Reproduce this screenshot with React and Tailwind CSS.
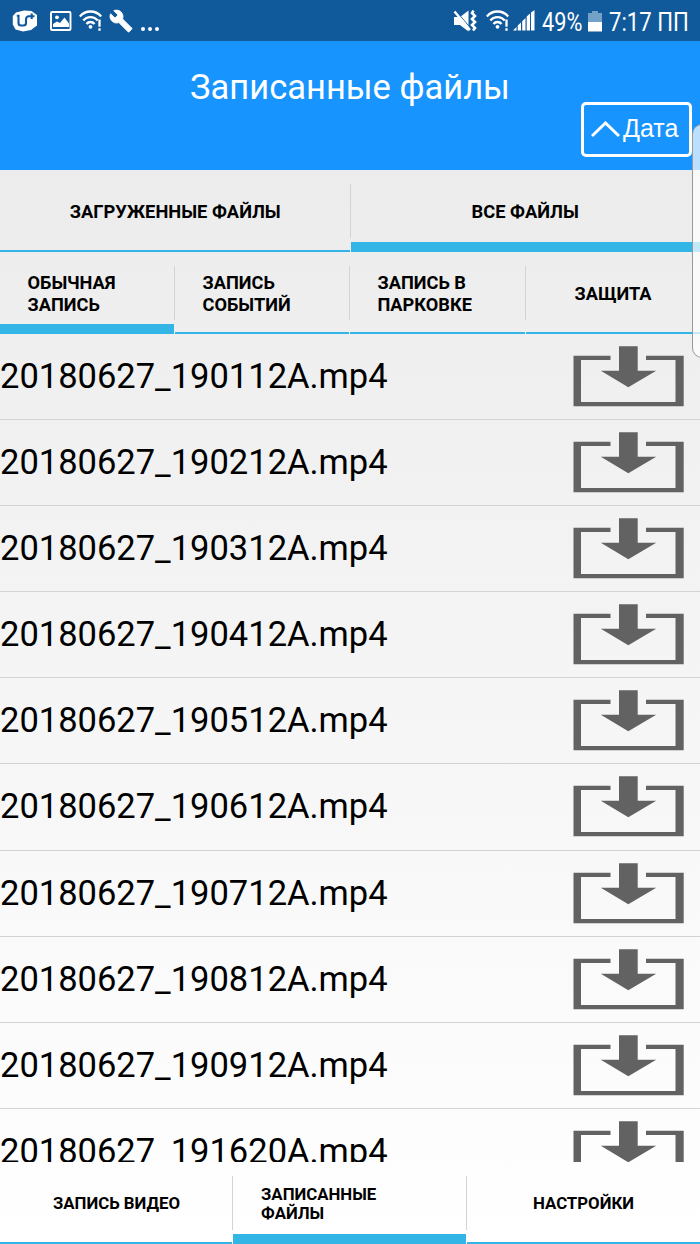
import React from 'react';
import clsx from 'clsx';

const files = [
  '20180627_190112A.mp4',
  '20180627_190212A.mp4',
  '20180627_190312A.mp4',
  '20180627_190412A.mp4',
  '20180627_190512A.mp4',
  '20180627_190612A.mp4',
  '20180627_190712A.mp4',
  '20180627_190812A.mp4',
  '20180627_190912A.mp4',
  '20180627_191620A.mp4',
];

const AppIcon = () => (
  <svg className="w-[26px] h-[22px]" viewBox="0 0 26 22" fill="none">
    <path d="M4 2.500L12 .5 19.500 1 25 5v10.500L19 20l-8 1.500L3.500 19.500 .8 14.500V6z" fill="#fff" />
    <path d="M4.800 5.700h1.700v7.300c0 1.700 1 2.500 2.500 2.500h2.500c1.700 0 2.500-.8 2.500-2.500V9.500c0-2 1-3.300 3-3.300H22.500M19.700 3.500v5.500" stroke="#10599b" strokeWidth="2.100" />
  </svg>
);

const PictureIcon = () => (
  <svg className="w-[22px] h-[20px]" viewBox="0 0 22 20" fill="none">
    <rect x="1" y="1" width="19.500" height="18" rx="1" stroke="#fff" strokeWidth="1.900" />
    <circle cx="7" cy="6.300" r="1.900" fill="#fff" />
    <path d="M3 16v-3l4-2.500 3 1.500 4.500-5.500 4.500 6V16z" fill="#fff" />
  </svg>
);

const WifiIcon = () => (
  <svg className="w-[24px] h-[21px]" viewBox="0 0 24 21" fill="none" stroke="#fff" strokeWidth="2.300">
    <path d="M.8 6.500C6.500-.2 16.500-.2 22.200 6.500" />
    <path d="M4.300 10.500c3.700-4.600 10.700-4.600 14.400 0" />
    <path d="M7.500 14c2-2.700 6-2.700 8 0" />
    <circle cx="11.500" cy="16.800" r="1.900" fill="#fff" stroke="none" />
    <path d="M20.500 9.500v7.300M20.500 18.200v2.500" strokeWidth="2.300" />
  </svg>
);

const WrenchIcon = () => (
  <svg className="w-[24px] h-[24px]" viewBox="0 0 24 24" fill="#fff" stroke="#fff" strokeWidth=".8">
    <path d="M22.700 19l-9.100-9.100c.9-2.300.4-5-1.500-6.900-2-2-5-2.400-7.400-1.300L9 6 6 9 1.600 4.700C.4 7.100.9 10.100 2.900 12.100c1.900 1.900 4.600 2.400 6.900 1.500l9.100 9.100c.4.4 1 .4 1.400 0l2.300-2.300c.5-.4.5-1.100.1-1.400z" />
  </svg>
);

const MuteIcon = () => (
  <svg className="w-[24px] h-[22px]" viewBox="0 0 24 22" fill="none">
    <path d="M1 7h6l8.500-6.500v21L7 15H1z" fill="#fff" />
    <path d="M3.500 1.500l14 16.500" stroke="#10599b" strokeWidth="1" />
    <path d="M1.500 1.500l15.500 18.500" stroke="#fff" strokeWidth="2.400" />
    <path d="M20.500 .5l-1.500 2.500 3 3-3 3 3 3-3 3 3 3-2 2.500" stroke="#fff" strokeWidth="2.600" />
  </svg>
);

const SignalIcon = () => (
  <svg className="w-[22px] h-[21px]" viewBox="0 0 22 21" fill="#fff">
    <path d="M0 20.500L3.500 17v3.500zM4.700 20.500v-5L8 12.500v8zM9.200 20.500v-9.300L12.500 8v12.500zM13.700 20.500V6.500l3.300-3v17zM18 20.500V2.500L21.500 0v20.500z" />
  </svg>
);

const BatteryIcon = () => (
  <svg className="w-[14px] h-[21px]" viewBox="0 0 14 21">
    <path d="M4 0h6v2h4v9H0V2h4z" fill="#74a1c7" />
    <path d="M0 11h14v9.500H0z" fill="#fff" />
  </svg>
);

const DownloadIcon = () => (
  <svg className="w-[112px] h-[61px] shrink-0" viewBox="0 0 112 61" fill="#626262">
    <path d="M.5 9.700h37v4.300H8V56h94.500V14H73V9.700h37.700v50.600H.5z" />
    <path d="M46 .3h18.700V24.700h18.500L55.300 41.300 27.800 24.700H46z" />
  </svg>
);

const StatusBar = () => (
  <div className="flex h-[41px] shrink-0 items-center justify-between bg-[#10599b] text-white">
    <div className="flex items-center pl-[12px]">
      <AppIcon />
      <span className="ml-3 flex"><PictureIcon /></span>
      <span className="ml-[7px] flex"><WifiIcon /></span>
      <span className="ml-[6px] flex"><WrenchIcon /></span>
      <span className="ml-[8px] mt-[16px] flex gap-[3px]">
        <i className="size-[4px] rounded-full bg-white" />
        <i className="size-[4px] rounded-full bg-white" />
        <i className="size-[4px] rounded-full bg-white" />
      </span>
    </div>
    <div className="flex items-center">
      <MuteIcon />
      <span className="ml-[9px] flex"><WifiIcon /></span>
      <span className="ml-[3px] flex"><SignalIcon /></span>
      <span className="ml-[7px] mt-[3px] w-[40px] whitespace-nowrap text-[25px] leading-none">
        <span className="inline-block origin-left scale-x-[0.87]">49%</span>
      </span>
      <span className="ml-[6px] mt-[2px] flex"><BatteryIcon /></span>
      <span className="ml-[7px] mt-[3px] w-[91px] whitespace-nowrap text-[25px] leading-none">
        <span className="inline-block origin-left scale-x-[0.885]">7:17 ПП</span>
      </span>
    </div>
  </div>
);

const Header = () => (
  <header className="flex h-[129px] shrink-0 flex-col bg-[#1894ff] text-white">
    <h1 className="mt-[25px] text-center text-[34.500px] leading-[42px]">Записанные файлы</h1>
    <button className="mr-[8px] mt-[-6px] flex h-[55px] w-[111px] items-center self-end rounded-[5px] border-[3px] border-white pl-[7px] font-['Liberation_Sans',sans-serif] text-[25px]">
      <svg className="mr-[3px] h-[17px] w-[29px]" viewBox="0 0 29 17" fill="none" stroke="#fff" strokeWidth="3">
        <path d="M1 15L14.500 2 28 15" />
      </svg>
      <span className="-mt-[2px] leading-none">Дата</span>
    </button>
  </header>
);

const Tab = ({ children, active, last, className }) => (
  <div className={clsx('relative flex h-[82px] flex-col', className)}>
    <div className="flex h-[84px] shrink-0 items-center justify-center font-bold">{children}</div>
    <div className={clsx('shrink-0 bg-[#33b5e5]', active ? '-mt-[12px] h-[10px]' : '-mt-[4px] h-[2px]', !last && 'mr-px')} />
    {!last && <i className="absolute right-0 top-[14px] h-[54px] w-px bg-[#d3d3d3]" />}
  </div>
);

const FileRow = ({ name }) => (
  <div className="flex h-[86.100px] shrink-0 items-start justify-between border-b border-[#d3d3d3] pr-[15px]">
    <span className="mt-[21px] text-[34.500px] leading-[42px]">{name}</span>
    <span className="mt-[12px] flex"><DownloadIcon /></span>
  </div>
);

function App() {
  return (
    <div className="relative flex h-[1244px] w-[700px] flex-col overflow-hidden bg-linear-to-b from-[#e9e9e9] to-white font-[Roboto,sans-serif] text-black">
      <StatusBar />
      <Header />
      <nav className="flex shrink-0 text-[18.300px]">
        <Tab className="w-[350.500px]"><span>ЗАГРУЖЕННЫЕ ФАЙЛЫ</span></Tab>
        <Tab className="w-[349.500px]" active last><span>ВСЕ ФАЙЛЫ</span></Tab>
      </nav>
      <nav className="flex h-[81px] shrink-0 text-[18.200px] leading-[22px]">
        <Tab className="w-[175px]" active><span className="w-[120px]">ОБЫЧНАЯ ЗАПИСЬ</span></Tab>
        <Tab className="w-[175px]"><span className="w-[120px]">ЗАПИСЬ СОБЫТИЙ</span></Tab>
        <Tab className="w-[176px]"><span className="w-[121px]">ЗАПИСЬ В ПАРКОВКЕ</span></Tab>
        <Tab className="w-[174px]" last><span>ЗАЩИТА</span></Tab>
      </nav>
      <main className="flex h-[829px] shrink-0 flex-col overflow-hidden pt-px">
        {files.map((name) => (
          <FileRow key={name} name={name} />
        ))}
      </main>
      <nav className="flex shrink-0 text-[16.800px] leading-[19.500px]">
        <Tab className="w-[233px]"><span>ЗАПИСЬ ВИДЕО</span></Tab>
        <Tab className="w-[234px]" active><span className="w-[178px]">ЗАПИСАННЫЕ<br />ФАЙЛЫ</span></Tab>
        <Tab className="w-[233px]" last><span>НАСТРОЙКИ</span></Tab>
      </nav>
      {/* edge panel handle */}
      <div className="absolute left-[692px] top-[124px] h-[234px] w-[20px] rounded-[14px] border border-[#999999] bg-white/70" />
    </div>
  );
}

export default App;
